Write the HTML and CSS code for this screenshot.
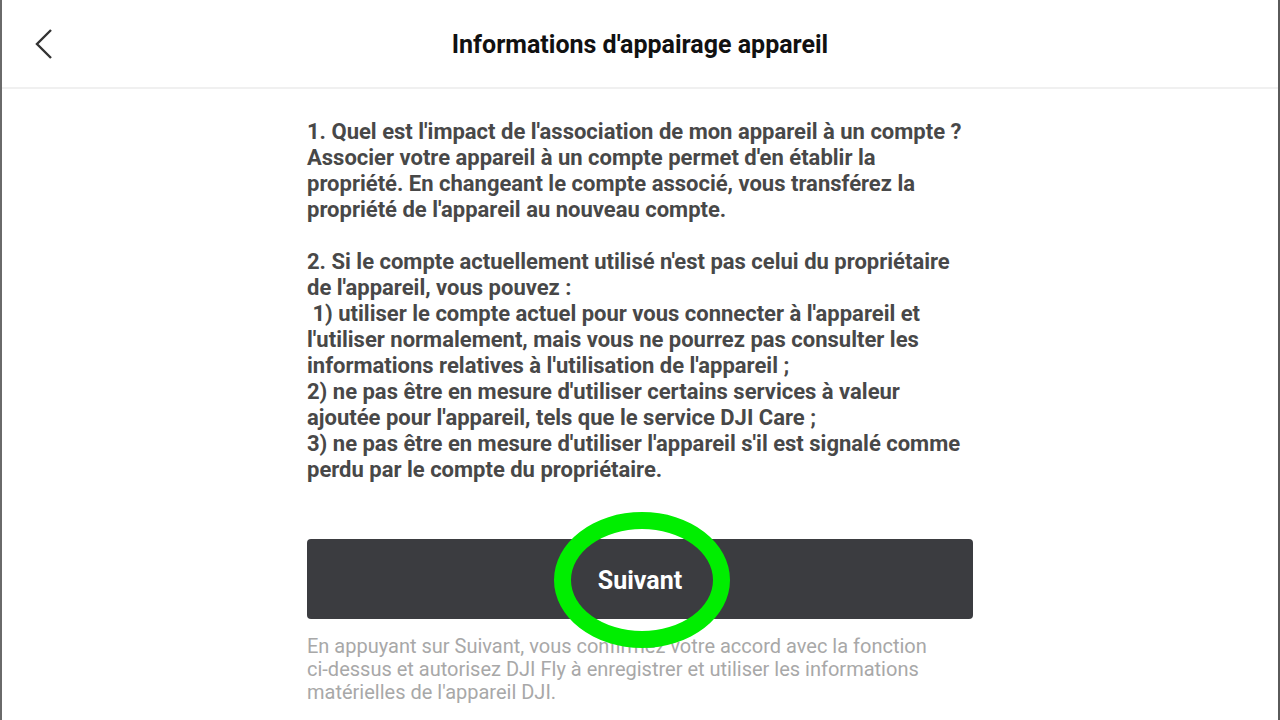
FILE: index.html
```html
<!DOCTYPE html>
<html>
<head>
<link rel="stylesheet" href="styles.css">
</head>
<body>

<div class="screen">

  <!-- Top bar -->
  <div class="topbar">
    <span class="back">
      <svg width="20" height="32" viewBox="0 0 20 32"><path d="M17 2 L3 16 L17 30" fill="none" stroke="#333" stroke-width="2.4"/></svg>
    </span>
    <h1 class="title">Informations d'appairage appareil</h1>
  </div>

  <!-- Content -->
  <div class="content">
    <p class="info">1. Quel est l'impact de l'association de mon appareil à un compte ?<br>
Associer votre appareil à un compte permet d'en établir la propriété. En changeant le compte associé, vous transférez la propriété de l'appareil au nouveau compte.<br>
<br>
2. Si le compte actuellement utilisé n'est pas celui du propriétaire de l'appareil, vous pouvez :<br>
&nbsp;1) utiliser le compte actuel pour vous connecter à l'appareil et l'utiliser normalement, mais vous ne pourrez pas consulter les informations relatives à l'utilisation de l'appareil ;<br>
2) ne pas être en mesure d'utiliser certains services à valeur ajoutée pour l'appareil, tels que le service DJI Care ;<br>
3) ne pas être en mesure d'utiliser l'appareil s'il est signalé comme perdu par le compte du propriétaire.</p>

    <div class="btn-wrap">
      <button class="next" type="button">Suivant</button>
      <span class="ring"></span>
    </div>

    <p class="note">En appuyant sur Suivant, vous confirmez votre accord avec la fonction <span class="nowrap">ci-dessus</span> et autorisez DJI Fly à enregistrer et utiliser les informations matérielles de l'appareil DJI.</p>
  </div>

</div>

</body>
</html>
```

FILE: styles.css
```css
/* Page */
html, body {
    margin: 0;
    padding: 0;
    background: #fff;
}

.screen {
    width: 1280px;
    height: 720px;
    box-sizing: border-box;
    border-left: 2px solid #6a6a6a;
    border-right: 2px solid #5a5a5a;
    overflow: hidden;
    font-family: Roboto, "Liberation Sans", sans-serif;
}

/* Top bar */
.topbar {
    height: 87px;
    border-bottom: 2px solid #f0f0f0;
    display: flex;
    align-items: center;
    justify-content: center;
    position: relative;
}

.back {
    position: absolute;
    left: 32px;
    top: 28px;
    width: 20px;
    height: 32px;
}

.title {
    margin: 0;
    font-size: 25px;
    font-weight: 700;
    color: #111;
    padding-top: 2px;
}

/* Content */
.content {
    width: 666px;
    margin: 0 auto;
    padding-top: 30px;
    padding-left: 0;
}

.info {
    margin: 0;
    width: 662px;
    font-size: 22px;
    font-weight: 700;
    line-height: 26px;
    color: #484848;
}

.btn-wrap {
    position: relative;
    margin-top: 56px;
}

.next {
    display: block;
    width: 666px;
    height: 80px;
    border: none;
    border-radius: 4px;
    background: #3b3c40;
    color: #fff;
    font-family: Roboto, "Liberation Sans", sans-serif;
    font-size: 25px;
    font-weight: 700;
    padding: 0;
    padding-top: 2px;
}

/* Green annotation ring */
.ring {
    position: absolute;
    left: 247px;
    top: -27px;
    width: 142px;
    height: 102px;
    border: 17px solid #00ee00;
    border-radius: 50%;
}

.note {
    margin: 16px 0 0;
    font-size: 20px;
    line-height: 23px;
    color: #a8a8a8;
}

.nowrap {
    white-space: nowrap;
}
```
